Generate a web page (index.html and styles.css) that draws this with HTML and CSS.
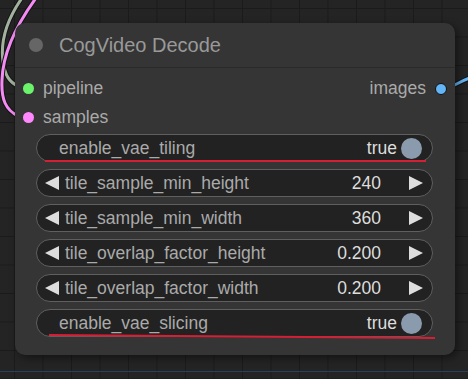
FILE: index.html
```html
<!DOCTYPE html>
<html lang="en">
<head>
<meta charset="UTF-8">
<meta name="viewport" content="width=device-width, initial-scale=1.0">
<title>CogVideo Decode</title>
<link rel="stylesheet" href="styles.css">
</head>
<body>

<svg class="wires" width="468" height="379" viewBox="0 0 468 379">
    <path class="wire-edge" d="M22,-2 C8,18 0,40 3,62 C5,75 9,82 18,86" />
    <path class="wire-green" d="M22,-2 C8,18 0,40 3,62 C5,75 9,82 18,86" />
    <path class="wire-edge" d="M36,-2 C20,20 3,50 2,80 C1,100 6,110 18,116" />
    <path class="wire-pink" d="M36,-2 C20,20 3,50 2,80 C1,100 6,110 18,116" />
    <path class="wire-edge" d="M445,88 C452,88 458,82 470,78" />
    <path class="wire-blue" d="M445,88 C452,88 458,82 470,78" />
</svg>

<div class="node">
    <div class="node-title">
        <span class="title-dot"></span>
        <span class="title-text">CogVideo Decode</span>
    </div>

    <div class="slots">
        <div class="slot-row">
            <div class="slot">
                <span class="slot-dot green"></span>
                <span>pipeline</span>
            </div>
            <div class="slot out">
                <span>images</span>
                <span class="slot-dot blue"></span>
            </div>
        </div>
        <div class="slot-row">
            <div class="slot">
                <span class="slot-dot pink"></span>
                <span>samples</span>
            </div>
        </div>
    </div>

    <div class="widgets">
        <div class="widget toggle">
            <span class="label">enable_vae_tiling</span>
            <span class="value">true</span>
            <span class="knob"></span>
            <span class="mark mark-top"></span>
        </div>
        <div class="widget number">
            <span class="arrow-left"></span>
            <span class="label">tile_sample_min_height</span>
            <span class="value">240</span>
            <span class="arrow-right"></span>
        </div>
        <div class="widget number">
            <span class="arrow-left"></span>
            <span class="label">tile_sample_min_width</span>
            <span class="value">360</span>
            <span class="arrow-right"></span>
        </div>
        <div class="widget number">
            <span class="arrow-left"></span>
            <span class="label">tile_overlap_factor_height</span>
            <span class="value">0.200</span>
            <span class="arrow-right"></span>
        </div>
        <div class="widget number">
            <span class="arrow-left"></span>
            <span class="label">tile_overlap_factor_width</span>
            <span class="value">0.200</span>
            <span class="arrow-right"></span>
        </div>
        <div class="widget toggle">
            <span class="label">enable_vae_slicing</span>
            <span class="value">true</span>
            <span class="knob"></span>
            <span class="mark mark-bottom"></span>
        </div>
    </div>
</div>

</body>
</html>
```

FILE: styles.css
```css
body {
    margin: 0;
    width: 468px;
    height: 379px;
    overflow: hidden;
    position: relative;
    font-family: "Liberation Sans", Arial, sans-serif;
    background-color: #242424;
    background-image:
        linear-gradient(#2c3d5e, #2c3d5e),
        linear-gradient(90deg, #1b1b1b 1px, transparent 1px),
        linear-gradient(#1b1b1b 1px, transparent 1px);
    background-size: 100% 1px, 28.5px 28.5px, 28.5px 28.5px;
    background-position: 0 371px, 14px 0, 0 8px;
    background-repeat: no-repeat, repeat, repeat;
}
.wires {
    position: absolute;
    left: 0;
    top: 0;
    fill: none;
}
.wire-edge {
    stroke: #141414;
    stroke-width: 5;
}
.wire-green {
    stroke: #a3b19f;
    stroke-width: 3;
}
.wire-pink {
    stroke: #f58cf5;
    stroke-width: 3;
}
.wire-blue {
    stroke: #64b5f6;
    stroke-width: 3;
}
.node {
    position: relative;
    margin: 23px 0 0 15px;
    width: 440px;
    padding-bottom: 18px;
    background: #353535;
    border-radius: 10px;
    box-shadow: 3px 3px 8px rgba(0, 0, 0, 0.45);
}
.node-title {
    height: 44px;
    display: flex;
    align-items: center;
    gap: 16px;
    padding-left: 14px;
    border-bottom: 1px solid #2a2a2a;
}
.title-dot {
    width: 14px;
    height: 14px;
    border-radius: 50%;
    background: #666;
}
.title-text {
    font-size: 20px;
    color: #999;
}
.slots {
    padding-top: 6px;
}
.slot-row {
    height: 29px;
    display: flex;
    align-items: center;
    justify-content: space-between;
}
.slot {
    display: flex;
    align-items: center;
    gap: 9px;
    padding-left: 8px;
    font-size: 17.5px;
    color: #aaa;
}
.slot.out {
    padding-left: 0;
    padding-right: 8px;
}
.slot-dot {
    width: 11px;
    height: 11px;
    border-radius: 50%;
}
.green {
    background: #7f7;
    background: #6cf36c;
}
.pink {
    background: #f8f;
}
.blue {
    width: 10px;
    height: 10px;
    background: #64b5f6;
    border: 1px solid #111;
}
.widgets {
    display: flex;
    flex-direction: column;
    gap: 7px;
    margin: 2px 22px 0 21px;
}
.widget {
    position: relative;
    height: 28px;
    box-sizing: border-box;
    display: flex;
    align-items: center;
    background: #222;
    border: 1px solid #5f5f5f;
    border-radius: 14px;
    font-size: 17.5px;
}
.label {
    flex: 1;
    color: #aaa;
    white-space: nowrap;
}
.value {
    color: #ddd;
}
.toggle {
    padding: 0 10px 0 22px;
}
.knob {
    width: 21px;
    height: 21px;
    margin-left: 4px;
    border-radius: 50%;
    background: #8b9bae;
}
.number {
    padding: 0 9px 0 8px;
}
.number .label {
    margin-left: 6px;
}
.arrow-left {
    width: 0;
    height: 0;
    border-top: 7.5px solid transparent;
    border-bottom: 7.5px solid transparent;
    border-right: 14px solid #ddd;
}
.arrow-right {
    width: 0;
    height: 0;
    margin-left: 28px;
    border-top: 7.5px solid transparent;
    border-bottom: 7.5px solid transparent;
    border-left: 14px solid #ddd;
}
/* red annotation strokes */
.mark {
    position: absolute;
    height: 2px;
    background: #d41f35;
}
.mark-top {
    left: 8px;
    right: 6px;
    bottom: -1px;
}
.mark-bottom {
    left: 12px;
    width: 386px;
    top: 24px;
    transform: rotate(0.45deg);
    transform-origin: left center;
}
```
